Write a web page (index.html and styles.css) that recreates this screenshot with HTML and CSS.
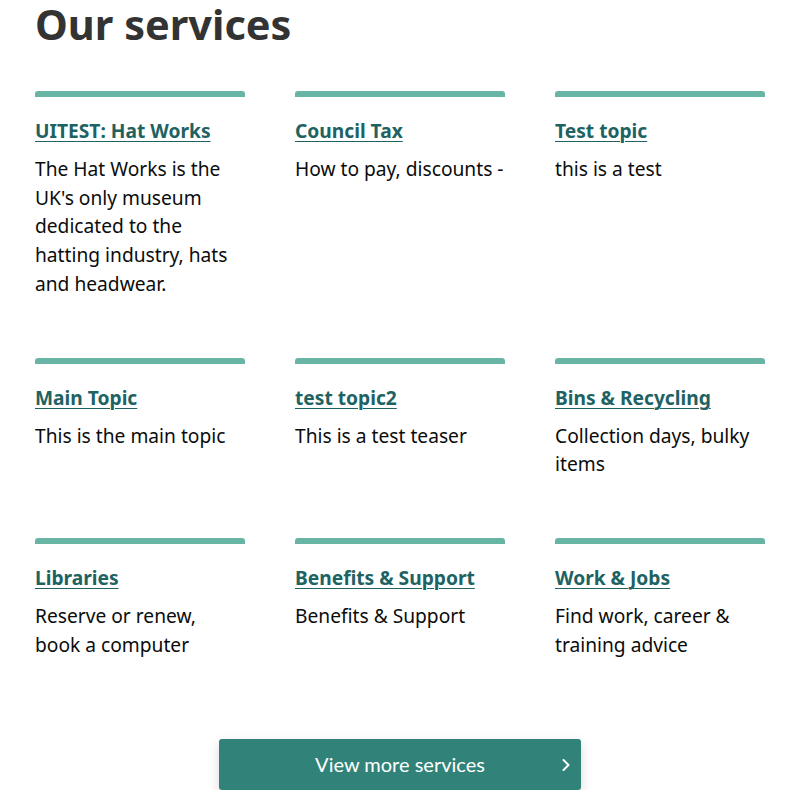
FILE: index.html
```html
<!DOCTYPE html>
<html lang="en">
<head>
<meta charset="utf-8">
<title>Our services</title>
<link rel="stylesheet" href="styles.css">
</head>
<body>
<main class="services">
  <h1 class="services__title">Our services</h1>
  <ul class="services__grid">
    <li class="card">
      <a class="card__link" href="#">UITEST: Hat Works</a>
      <p class="card__text">The Hat Works is the UK's only museum dedicated to the hatting industry, hats and headwear.</p>
    </li>
    <li class="card">
      <a class="card__link" href="#">Council Tax</a>
      <p class="card__text">How to pay, discounts -</p>
    </li>
    <li class="card">
      <a class="card__link" href="#">Test topic</a>
      <p class="card__text">this is a test</p>
    </li>
    <li class="card">
      <a class="card__link" href="#">Main Topic</a>
      <p class="card__text">This is the main topic</p>
    </li>
    <li class="card">
      <a class="card__link" href="#">test topic2</a>
      <p class="card__text">This is a test teaser</p>
    </li>
    <li class="card">
      <a class="card__link" href="#">Bins &amp; Recycling</a>
      <p class="card__text">Collection days, bulky items</p>
    </li>
    <li class="card">
      <a class="card__link" href="#">Libraries</a>
      <p class="card__text">Reserve or renew, book a computer</p>
    </li>
    <li class="card">
      <a class="card__link" href="#">Benefits &amp; Support</a>
      <p class="card__text">Benefits &amp; Support</p>
    </li>
    <li class="card">
      <a class="card__link" href="#">Work &amp; Jobs</a>
      <p class="card__text">Find work, career &amp; training advice</p>
    </li>
  </ul>
  <div class="services__more">
    <a class="button" href="#">
      <span class="button__label">View more services</span>
      <svg class="button__icon" width="10" height="14" viewBox="0 0 10 14" aria-hidden="true"><path d="M2.5 2 L7.5 7 L2.5 12" fill="none" stroke="#fff" stroke-width="2" stroke-linecap="round" stroke-linejoin="round"/></svg>
    </a>
  </div>
</main>
</body>
</html>
```
FILE: styles.css
```css
* { box-sizing: border-box; }
html, body { margin: 0; padding: 0; background: #fff; }
body {
  font-family: "Noto Sans", "Open Sans", sans-serif;
  color: #0b0c0c;
}
.services {
  padding: 0 35px;
}
.services__title {
  margin: 0;
  font-size: 41.5px;
  line-height: 48px;
  font-weight: 700;
  color: #333;
}
.services__grid {
  list-style: none;
  margin: 43px 0 0;
  padding: 0;
  display: grid;
  grid-template-columns: repeat(3, 1fr);
  column-gap: 50px;
}
.card {
  border-top: 6px solid #68b5a6;
  border-radius: 3px 3px 0 0;
  padding-top: 20px;
  padding-bottom: 59px;
}
.card__link {
  display: inline-block;
  font-size: 19.2px;
  line-height: 28.8px;
  font-weight: 700;
  color: #206262;
  text-decoration: underline;
  text-decoration-thickness: 1px;
  text-underline-offset: 3px;
}
.card__text {
  margin: 9px 0 0;
  font-size: 19.2px;
  line-height: 28.8px;
}
.services__more {
  display: flex;
  justify-content: center;
  margin-top: 20px;
}
.button {
  position: relative;
  display: flex;
  align-items: center;
  justify-content: center;
  width: 362px;
  height: 51px;
  background: #318379;
  color: #fff;
  border-radius: 3px;
  text-decoration: none;
  box-shadow: 0 4px 12px rgba(0,0,0,0.15);
  font-family: Lato, "Noto Sans", sans-serif;
  font-size: 20px;
}
.button__icon {
  position: absolute;
  right: 10px;
  top: 19px;
}
```
